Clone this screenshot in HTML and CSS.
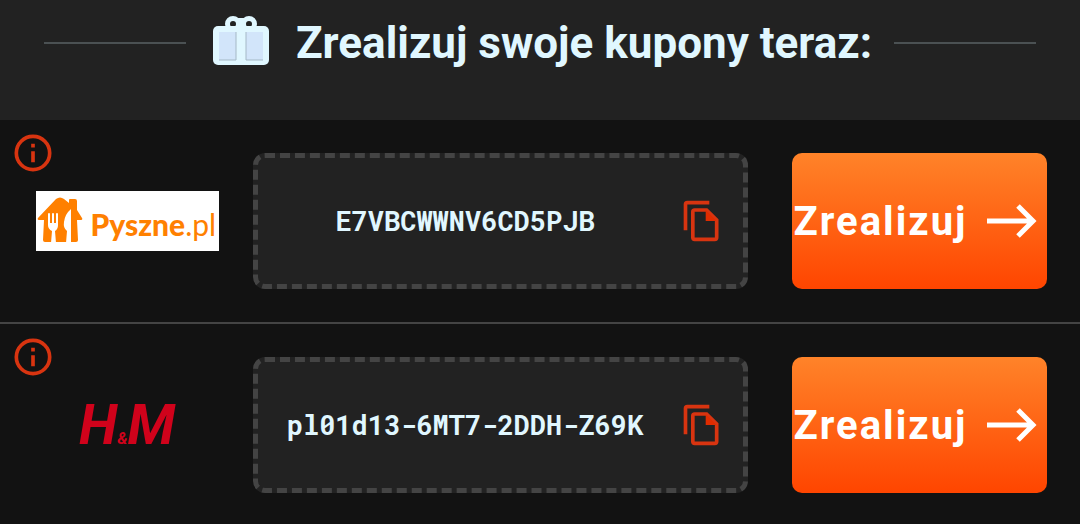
FILE: index.html
```
<!DOCTYPE html>
<html lang="pl">
<head>
    <meta charset="UTF-8">
    <meta name="viewport" content="width=device-width, initial-scale=1.0">
    <title>Kupony</title>
    <link rel="stylesheet" href="styles.css">
</head>
<body>

<header class="header">
    <span class="line"></span>
    <svg class="gift" viewBox="0 0 56 58" aria-hidden="true">
        <g fill="none" stroke="#e0f7ff" stroke-width="5">
            <circle cx="20" cy="10" r="5.5"/>
            <circle cx="36" cy="10" r="5.5"/>
        </g>
        <rect x="24" y="4" width="8" height="10" fill="#e0f7ff"/>
        <rect x="0" y="12" width="56" height="39" rx="5" fill="#e0f7ff"/>
        <path d="M6 18h17v28H6zM33 18h17v28H33z" fill="#d2e5fa"/>
        <path d="M6 46h17V18M50 46H33V18" fill="none" stroke="#a5b8c6"/>
    </svg>
    <h1 class="title">Zrealizuj swoje kupony teraz:</h1>
    <span class="line"></span>
</header>

<main class="coupons">
    <section class="coupon">
        <button class="info" type="button" aria-label="Informacje">
            <svg viewBox="0 0 24 24"><circle cx="12" cy="12" r="9.1"/><path d="M12 7v2M12 11v6"/></svg>
        </button>
        <div class="brand">
            <div class="pyszne">
                <svg class="house" viewBox="0 0 46 48" aria-hidden="true">
                    <path fill="#ff8000" d="M1 21 19 2q4-3 8 0l5 4V3q0-1 1-1h5q2 0 2 2v9l5 8q1 2-1 2h-4l1 20q0 2-2 2H8q-2 0-2-2l1-20H2q-2 0-1-2z"/>
                    <path fill="#fff" d="M11 17q0-1 1-1t1 1v9h2v-9q0-1 1-1t1 1v9h2v-9q0-1 1-1t1 1v11q0 4-3 6l1 12h-5l1-12q-4-2-4-6z"/>
                    <path fill="#fff" d="M34 12v34h-5l1-12q-4-3-3-9 1-8 7-13z"/>
                </svg>
                <span class="pyszne-name">Pyszne<span class="pyszne-tld">.pl</span></span>
            </div>
        </div>
        <div class="code">
            <span class="code-text">E7VBCWWNV6CD5PJB</span>
            <button class="copy" type="button" aria-label="Kopiuj">
                <svg viewBox="0 0 24 24"><path d="M3 17V3q0-1 1-1h12M8 6h6.500l5.500 5.500V21q0 1-1 1H8q-1 0-1-1V7q0-1 1-1z"/><path class="fold" d="M14 6v6h6z"/></svg>
            </button>
        </div>
        <button class="redeem" type="button">
            Zrealizuj
            <svg viewBox="0 0 50 34" aria-hidden="true"><path d="M0 17h46M31 2l15 15-15 15"/></svg>
        </button>
    </section>

    <section class="coupon">
        <button class="info" type="button" aria-label="Informacje">
            <svg viewBox="0 0 24 24"><circle cx="12" cy="12" r="9.1"/><path d="M12 7v2M12 11v6"/></svg>
        </button>
        <div class="brand">
            <div class="hm">H<small>&amp;</small>M</div>
        </div>
        <div class="code">
            <span class="code-text">pl01d13-6MT7-2DDH-Z69K</span>
            <button class="copy" type="button" aria-label="Kopiuj">
                <svg viewBox="0 0 24 24"><path d="M3 17V3q0-1 1-1h12M8 6h6.500l5.500 5.500V21q0 1-1 1H8q-1 0-1-1V7q0-1 1-1z"/><path class="fold" d="M14 6v6h6z"/></svg>
            </button>
        </div>
        <button class="redeem" type="button">
            Zrealizuj
            <svg viewBox="0 0 50 34" aria-hidden="true"><path d="M0 17h46M31 2l15 15-15 15"/></svg>
        </button>
    </section>
</main>

</body>
</html>
```
FILE: styles.css
```
* {
    box-sizing: border-box;
}
body {
    margin: 0;
    background: #121212;
    color: #e0f7ff;
    font-family: Roboto, "Liberation Sans", sans-serif;
}
button {
    padding: 0;
    border: none;
    background: none;
    font-family: inherit;
    cursor: pointer;
}
svg {
    display: block;
    flex: none;
}

/* header */
.header {
    display: flex;
    align-items: center;
    gap: 22px;
    padding: 14px 44px 48px;
    background: #222;
}
.line {
    flex: 1;
    height: 2px;
    background: #4b5153;
}
.gift {
    width: 56px;
    height: 58px;
    margin: 0 5px;
}
.title {
    margin: 0;
    font-size: 44px;
    line-height: 58px;
    font-weight: 700;
}

/* coupons */
.coupon {
    position: relative;
    display: flex;
    align-items: center;
    gap: 32px;
    padding: 33px;
}
.coupon + .coupon {
    border-top: 2px solid #444;
}
.info {
    position: absolute;
    top: 11px;
    left: 11px;
}
.info svg,
.copy svg {
    width: 44px;
    height: 44px;
    fill: none;
    stroke: #d83410;
    stroke-width: 2;
}
.copy .fold {
    fill: #e02c00;
    stroke: none;
}
.brand {
    display: flex;
    justify-content: center;
    width: 188px;
}
.pyszne {
    display: flex;
    align-items: center;
    gap: 8px;
    width: 183px;
    height: 60px;
    padding-left: 1px;
    background: #fff;
    color: #ff8000;
    font-family: Lato, "Open Sans", sans-serif;
}
.house {
    width: 46px;
    height: 48px;
}
.pyszne-name {
    padding-top: 5px;
    font-size: 30px;
    line-height: 40px;
    font-weight: 900;
}
.pyszne-tld {
    font-weight: 400;
}
.hm {
    display: flex;
    align-items: baseline;
    color: #d0021b;
    font-size: 56px;
    line-height: 64px;
    font-style: italic;
    font-weight: 700;
}
.hm small {
    font-size: 16px;
    line-height: 20px;
}
.code {
    flex: 1;
    display: flex;
    align-items: center;
    gap: 8px;
    height: 136px;
    padding-right: 19px;
    border: 5px dashed #444;
    border-radius: 12px;
    background: #222;
}
.code-text {
    flex: 1;
    text-align: center;
    font-family: "Roboto Mono", "DejaVu Sans Mono", monospace;
    font-size: 27px;
    line-height: 36px;
    font-weight: 700;
}
.redeem {
    display: flex;
    align-items: center;
    justify-content: center;
    gap: 20px;
    width: 255px;
    height: 136px;
    margin-left: 12px;
    padding-right: 8px;
    border-radius: 10px;
    background: linear-gradient(#ff8329, #ff4500);
    color: #fff;
    font-size: 40px;
    font-weight: 700;
    letter-spacing: 2px;
}
.redeem svg {
    width: 50px;
    height: 34px;
    fill: none;
    stroke: #fff;
    stroke-width: 5;
}
```
